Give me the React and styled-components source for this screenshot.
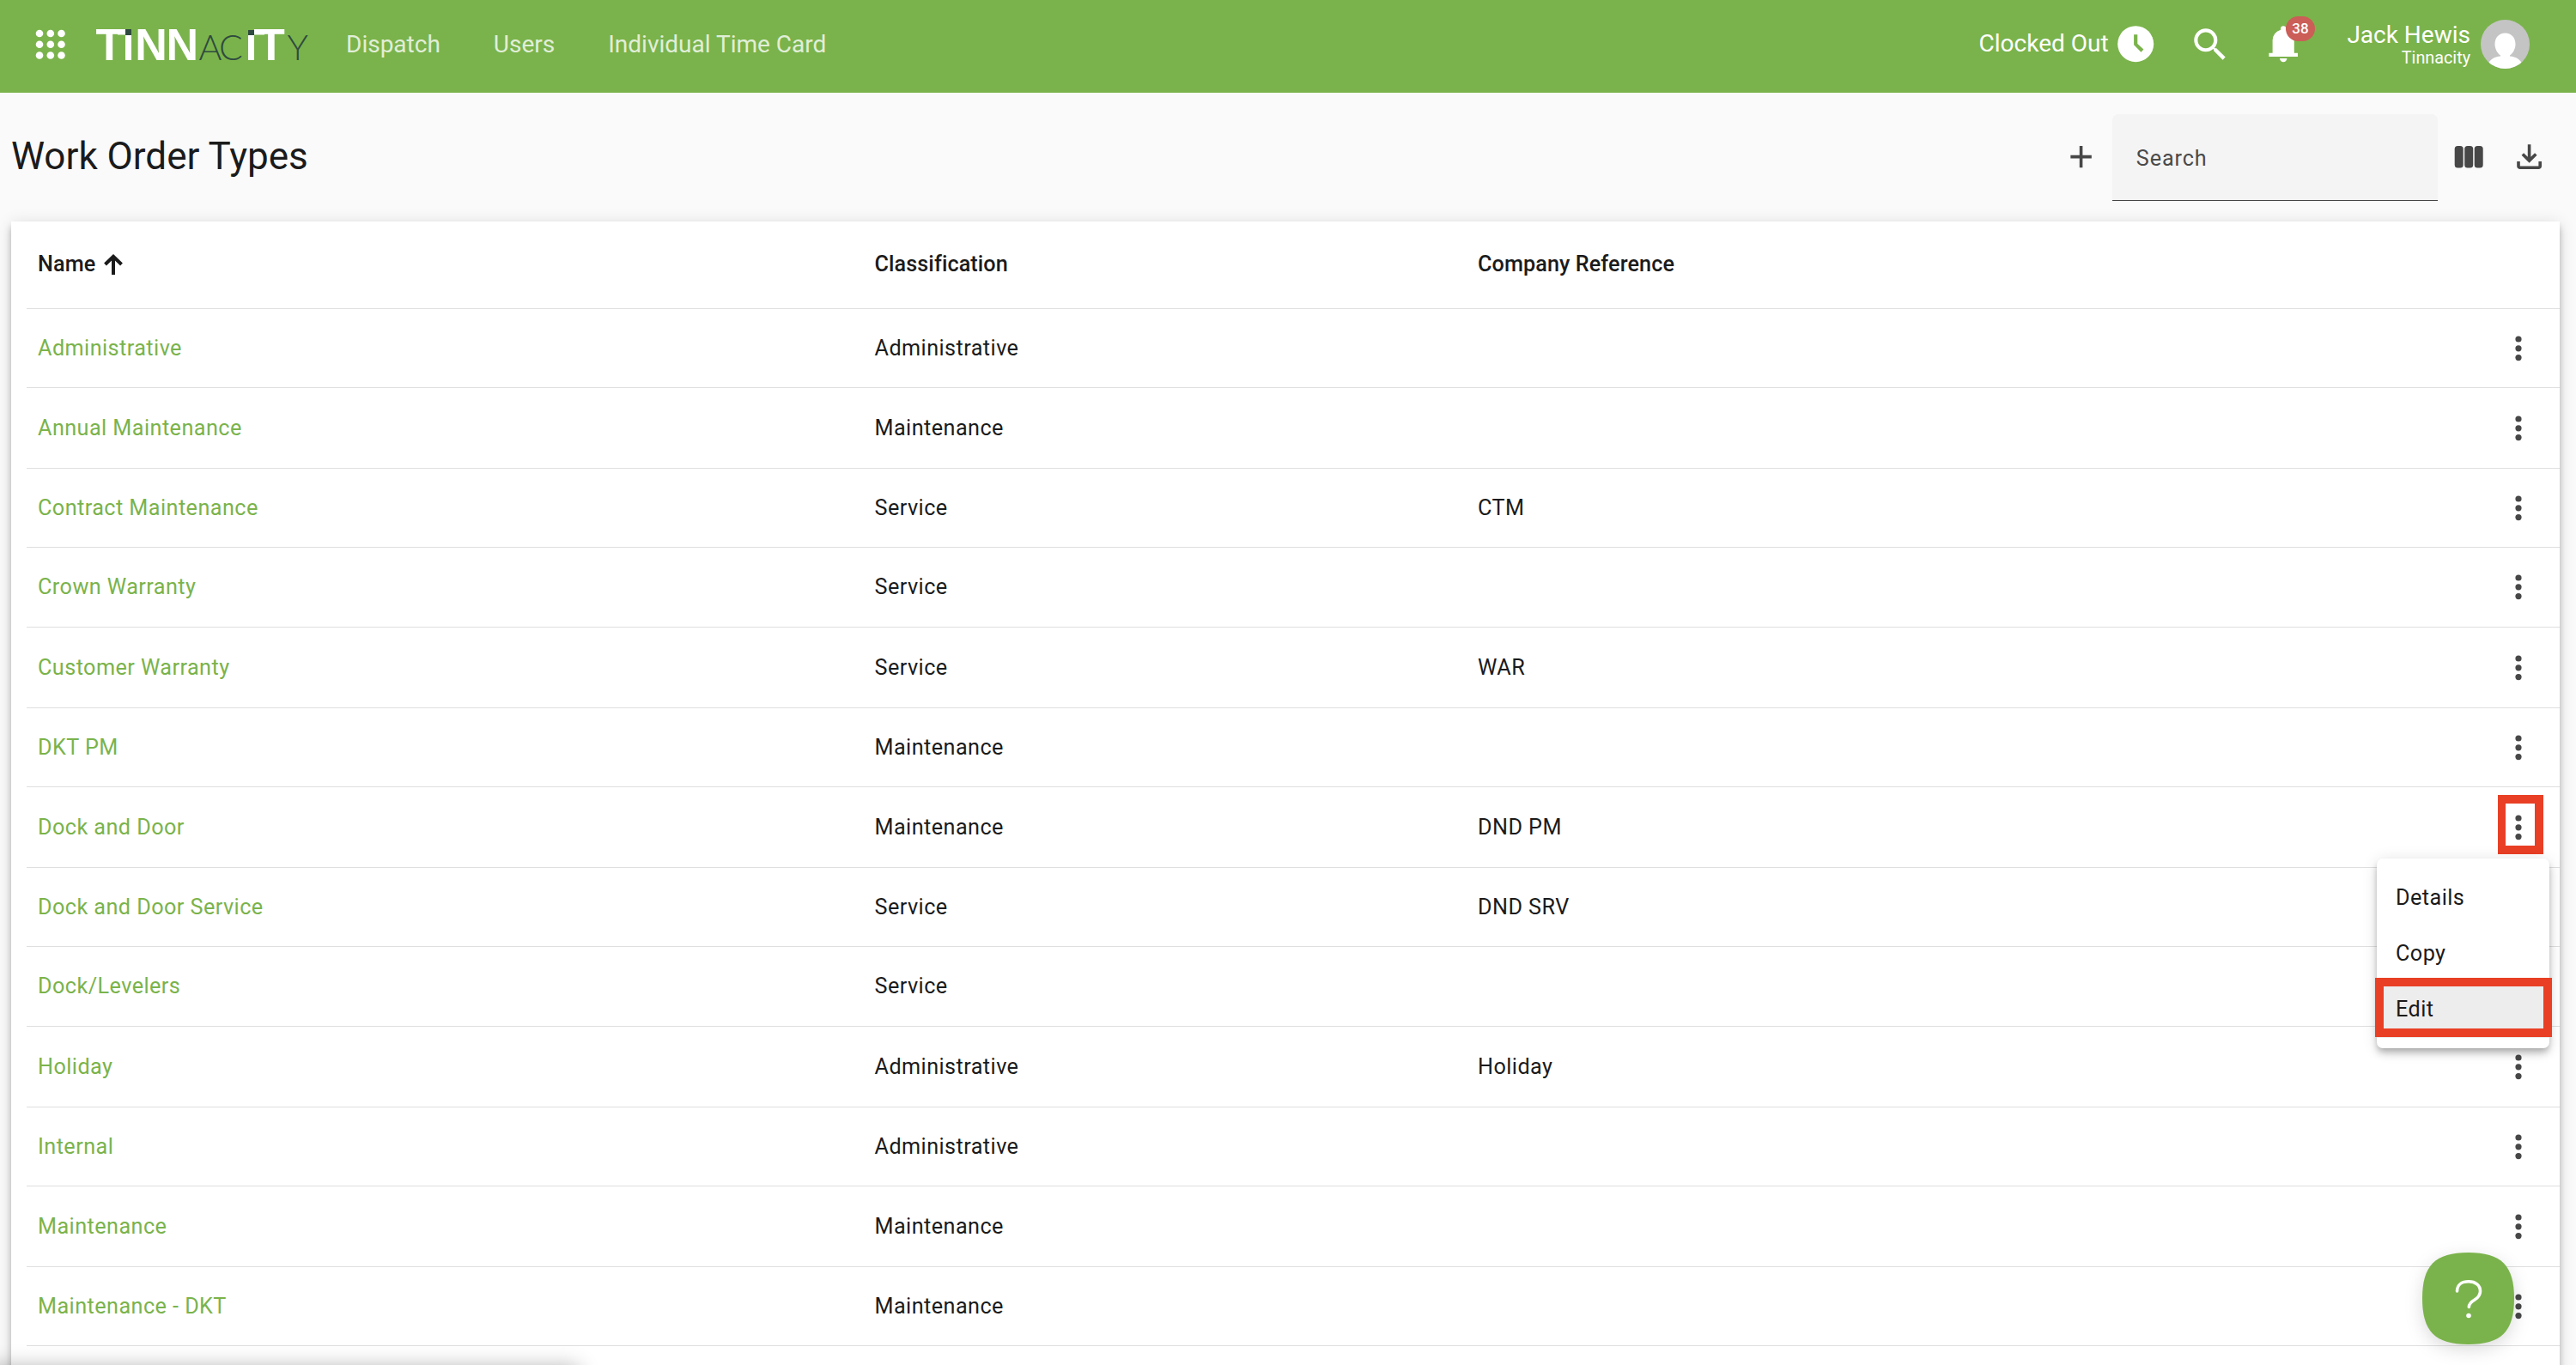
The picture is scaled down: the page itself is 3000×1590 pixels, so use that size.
import React from "react";
import styled, { createGlobalStyle } from "styled-components";

const GREEN = "#7ab34b";
const INK = "#1b1b1b";
const ICON = "#474747";

const GlobalStyle = createGlobalStyle`
  *, *::before, *::after { box-sizing: border-box; }
  body {
    margin: 0;
    background: #fafafa;
    color: ${INK};
    font-family: Roboto, "Liberation Sans", sans-serif;
    overflow: hidden;
  }
`;

const Page = styled.div`
  position: relative;
  display: flex;
  flex-direction: column;
  height: 1590px;
  overflow: hidden;
`;

const TopBar = styled.header`
  display: flex;
  align-items: center;
  flex: none;
  height: 108px;
  padding: 0 54px 5px 42px;
  background: ${GREEN};
  color: #fff;
`;

const Glyph = styled.svg`
  display: block;
  flex: none;
  width: ${(p) => p.$w}px;
  height: ${(p) => p.$h || p.$w}px;
  overflow: visible;
`;

const Logo = styled(Glyph)`
  margin-left: 37px;
`;

const Nav = styled.nav`
  display: flex;
  gap: 62px;
  margin-left: 43px;
`;

const NavLink = styled.a`
  font-size: 28px;
  line-height: 36px;
  color: rgba(255, 255, 255, 0.8);
  letter-spacing: ${(p) => p.$spacing || 0}px;
`;

const Account = styled.div`
  display: flex;
  align-items: center;
  margin-left: auto;
`;

const ClockStatus = styled.div`
  display: flex;
  align-items: center;
  gap: 6px;
  font-size: 28px;
  line-height: 36px;
`;

const SearchButton = styled.div`
  margin-left: 37px;
`;

const Bell = styled.div`
  position: relative;
  margin-left: 35px;
`;

const Badge = styled.span`
  position: absolute;
  left: 28px;
  top: -7px;
  width: 34px;
  height: 29px;
  border-radius: 15px;
  background: #cb5e57;
  font-size: 17px;
  font-weight: 500;
  line-height: 29px;
  text-align: center;
`;

const User = styled.div`
  display: flex;
  flex-direction: column;
  align-items: flex-end;
  margin: 0 12px 0 49px;
`;

const UserName = styled.span`
  font-size: 28px;
  line-height: 32px;
`;

const UserCompany = styled.span`
  font-size: 19.8px;
  line-height: 22px;
`;

const Toolbar = styled.div`
  display: flex;
  align-items: center;
  flex: none;
  height: 150px;
  padding: 0 33px 0 13px;
`;

const Title = styled.h1`
  margin: 0 auto 2px 0;
  font-size: 44px;
  font-weight: 400;
  line-height: 60px;
`;

const SearchField = styled.div`
  display: flex;
  align-items: center;
  width: 379px;
  height: 101px;
  margin: 1px 12px 0 15px;
  padding: 2px 29px 0 28px;
  border-bottom: 1px solid #444;
  border-radius: 7px 7px 0 0;
  background: #f4f4f4;
  color: #4a4a4a;
  font-size: 25.2px;
  letter-spacing: 0.9px;
`;

const DownloadButton = styled.div`
  margin-left: 28px;
`;

const shadow = `
  0 4px 7px -2px rgba(0, 0, 0, 0.2),
  0 7px 9px 0 rgba(0, 0, 0, 0.14),
  0 2px 18px 0 rgba(0, 0, 0, 0.12)`;

const Card = styled.main`
  flex: none;
  width: 2968px;
  height: 1500px;
  margin-left: 13px;
  padding-left: 18px;
  background: #fff;
  box-shadow: ${shadow};
`;

const Row = styled.div`
  display: grid;
  grid-template-columns: 974.5px 702.5px 1fr 97px;
  align-items: center;
  height: ${(p) => p.$height}px;
  padding-left: 13px;
  border-bottom: 1px solid #dfdfdf;
  font-size: 25.2px;
  line-height: 36px;
  letter-spacing: 0.45px;
`;

const HeaderRow = styled(Row)`
  font-weight: 500;
  letter-spacing: 0.1px;
  padding-bottom: 1px;
`;

const SortLabel = styled.div`
  display: flex;
  align-items: center;
  gap: 10px;
`;

const NameLink = styled.a`
  color: ${GREEN};
`;

const ActionCell = styled.div`
  position: relative;
  display: flex;
  justify-content: center;
  height: 32px;
`;

const KebabHighlight = styled.div`
  position: absolute;
  left: 25px;
  top: -22px;
  width: 53px;
  height: 69px;
  border: 10px solid #e93f25;
  border-left-width: 9px;
`;

const Menu = styled.div`
  position: absolute;
  z-index: 2;
  left: -116px;
  top: 52px;
  width: 201px;
  height: 221px;
  padding: 14px 0;
  border-radius: 7px;
  background: #fff;
  box-shadow: ${shadow};
`;

const MenuItem = styled.div`
  position: relative;
  display: flex;
  align-items: center;
  height: 65px;
  padding-left: 22px;
  background: ${(p) => (p.$active ? "#ededed" : "transparent")};
`;

const ItemHighlight = styled.div`
  position: absolute;
  left: -2px;
  top: -5px;
  width: 206px;
  height: 69px;
  border: 10px solid #e93f25;
`;

const HelpButton = styled.div`
  position: absolute;
  z-index: 3;
  left: 2821px;
  top: 1459px;
  filter: drop-shadow(0 6px 10px rgba(0, 0, 0, 0.14));
`;

const StatusBubble = styled.div`
  position: absolute;
  left: -20px;
  top: 1592px;
  width: 694px;
  height: 40px;
  box-shadow: 0 0 24px rgba(0, 0, 0, 0.3);
`;

const rows = [
  { name: "Administrative", kind: "Administrative", height: 92 },
  { name: "Annual Maintenance", kind: "Maintenance", height: 94 },
  { name: "Contract Maintenance", kind: "Service", ref: "CTM", height: 92 },
  { name: "Crown Warranty", kind: "Service", height: 93 },
  { name: "Customer Warranty", kind: "Service", ref: "WAR", height: 94 },
  { name: "DKT PM", kind: "Maintenance", height: 92 },
  { name: "Dock and Door", kind: "Maintenance", ref: "DND PM", height: 94, open: true },
  { name: "Dock and Door Service", kind: "Service", ref: "DND SRV", height: 92 },
  { name: "Dock/Levelers", kind: "Service", height: 93 },
  { name: "Holiday", kind: "Administrative", ref: "Holiday", height: 94 },
  { name: "Internal", kind: "Administrative", height: 92 },
  { name: "Maintenance", kind: "Maintenance", height: 94 },
  { name: "Maintenance - DKT", kind: "Maintenance", height: 92 },
];

const menuItems = ["Details", "Copy", "Edit"];

function AppsIcon() {
  const steps = [4, 16.8, 29.5];
  return (
    <Glyph $w={34} viewBox="0 0 34 34" fill="#fff">
      {steps.map((y) => steps.map((x) => <circle key={`${x}-${y}`} cx={x} cy={y} r="4.3" />))}
    </Glyph>
  );
}

function BrandLogo() {
  const bold = {
    fontFamily: '"Liberation Sans", Arial, sans-serif',
    fontWeight: 700,
    fontSize: 52,
    fill: "#fff",
  };
  const thin = {
    fontFamily: 'Lato, sans-serif',
    fontWeight: 300,
    fontSize: 41,
    fill: "#2f4a3f",
  };
  return (
    <Logo $w={247} $h={36} viewBox="0 0 247 36">
      <text y="36" {...bold}>
        <tspan x="-1.5">T</tspan>
        <tspan x="44.2">N</tspan>
        <tspan x="80.5">N</tspan>
        <tspan x="187">T</tspan>
      </text>
      <path d="M24 0H33V6.5H24zM183 0H195V6.5H183zM33 7H40V36H33zM176 7H183V36H176z" fill="#fff" />
      <path d="M33 0H40V7H33zM176 1H183V7H176z" fill="#2f4a3f" />
      <text y="36" {...thin}>
        <tspan x="118.5">A</tspan>
        <tspan x="142">C</tspan>
        <tspan x="221.5">Y</tspan>
      </text>
    </Logo>
  );
}

function KebabIcon() {
  return (
    <Glyph $w={8} $h={32} viewBox="0 0 8 32" fill={ICON}>
      <circle cx="4" cy="5" r="3.6" />
      <circle cx="4" cy="15.8" r="3.6" />
      <circle cx="4" cy="26.6" r="3.6" />
    </Glyph>
  );
}

function RowMenu() {
  return (
    <Menu>
      {menuItems.map((item) => (
        <MenuItem key={item} $active={item === "Edit"}>
          {item}
          {item === "Edit" && <ItemHighlight />}
        </MenuItem>
      ))}
    </Menu>
  );
}

export default function App() {
  return (
    <>
      <GlobalStyle />
      <Page>
        <TopBar>
          <AppsIcon />
          <BrandLogo />
          <Nav>
            <NavLink>Dispatch</NavLink>
            <NavLink>Users</NavLink>
            <NavLink>Individual Time Card</NavLink>
          </Nav>
          <Account>
            <ClockStatus>
              Clocked Out
              <Glyph $w={50.4} viewBox="0 0 24 24">
                <circle cx="12" cy="12" r="10" fill="#fff" />
                <path d="M11 6.8h2v5.1l3.4 3.1-1.4 1.5-4-4z" fill={GREEN} />
              </Glyph>
            </ClockStatus>
            <SearchButton>
              <Glyph $w={50} viewBox="0 0 24 24" fill="#fff">
                <path d="M15.5 14h-.79l-.28-.27A6.471 6.471 0 0 0 16 9.5 6.5 6.5 0 1 0 9.5 16c1.61 0 3.09-.59 4.23-1.57l.27.28v.79l5 4.99L20.49 19l-4.99-5zm-6 0C7.01 14 5 11.99 5 9.5S7.01 5 9.5 5 14 7.01 14 9.5 11.99 14 9.5 14z" />
              </Glyph>
            </SearchButton>
            <Bell>
              <Glyph $w={50.4} viewBox="0 0 24 24" fill="#fff">
                <path d="M4 19v-2h2v-7q0-2.075 1.25-3.688T10.5 4.2v-.7q0-.625.438-1.062T12 2t1.063.438T13.5 3.5v.7q2 .5 3.25 2.113T18 10v7h2v2zm8 3q-.825 0-1.412-.587T10 20h4q0 .825-.587 1.413T12 22" />
              </Glyph>
              <Badge>38</Badge>
            </Bell>
            <User>
              <UserName>Jack Hewis</UserName>
              <UserCompany>Tinnacity</UserCompany>
            </User>
            <Glyph $w={57} viewBox="0 0 57 57">
              <clipPath id="avatar">
                <circle cx="28.5" cy="28.5" r="28.5" />
              </clipPath>
              <g clipPath="url(#avatar)">
                <rect width="57" height="57" fill="#c4c4c4" />
                <path
                  d="M28.5 15.5C36 15.5 40.5 21 40.5 28.5C40.5 34 37.5 39 34 41.5V42.5C41 43 47 46.5 49 53V58H8V53C10 46.5 16 43 23 42.5V41.5C19.5 39 16.5 34 16.5 28.5C16.5 21 21 15.5 28.5 15.5Z"
                  fill="#fff"
                />
              </g>
            </Glyph>
          </Account>
        </TopBar>

        <Toolbar>
          <Title>Work Order Types</Title>
          <Glyph $w={43.2} viewBox="0 0 24 24" fill={ICON}>
            <path d="M11 13H5.2v-2H11V5h2v6h5.8v2H13v6h-2z" />
          </Glyph>
          <SearchField>Search</SearchField>
          <Glyph $w={45} $h={26} viewBox="0 0 45 26" fill={ICON}>
            <rect x="7.7" width="10" height="25.5" rx="3.5" />
            <rect x="19.2" width="10" height="25.5" rx="3.5" />
            <rect x="30.7" width="10" height="25.5" rx="3.5" />
          </Glyph>
          <DownloadButton>
            <Glyph $w={43.2} viewBox="0 0 24 24" fill={ICON}>
              <path d="m12 16-5-5 1.4-1.45 2.6 2.6V4h2v8.15l2.6-2.6L17 11zm-6 4q-.825 0-1.412-.587T4 18v-3h2v3h12v-3h2v3q0 .825-.587 1.413T18 20z" />
            </Glyph>
          </DownloadButton>
        </Toolbar>

        <Card>
          <HeaderRow $height={102}>
            <SortLabel>
              Name
              <Glyph $w={22} $h={24} viewBox="0 0 22 24" fill="none" stroke={INK} strokeWidth="4">
                <path d="M11 24V3M1.5 12L11 2.8L20.5 12" />
              </Glyph>
            </SortLabel>
            <span>Classification</span>
            <span>Company Reference</span>
          </HeaderRow>
          {rows.map((row) => (
            <Row key={row.name} $height={row.height}>
              <NameLink>{row.name}</NameLink>
              <span>{row.kind}</span>
              <span>{row.ref}</span>
              <ActionCell>
                <KebabIcon />
                {row.open && <KebabHighlight />}
                {row.open && <RowMenu />}
              </ActionCell>
            </Row>
          ))}
        </Card>

        <HelpButton>
          <Glyph $w={107} viewBox="0 0 107 107" fill="none">
            <path
              d="M53.5 0C92 0 107 15 107 53.5S92 107 53.5 107 0 92 0 53.5 15 0 53.5 0Z"
              fill={GREEN}
            />
            <path
              d="M40.5 45C40.5 37.5 46 33.8 54 33.8C62 33.8 67.5 38 67.5 45C67.5 50 65 52.5 61 55C56 58 54.3 60.5 54.3 63.5"
              stroke="#fff"
              strokeWidth="3.6"
              strokeLinecap="round"
            />
            <circle cx="54" cy="73.5" r="2.8" fill="#fff" />
          </Glyph>
        </HelpButton>
        <StatusBubble />
      </Page>
    </>
  );
}
